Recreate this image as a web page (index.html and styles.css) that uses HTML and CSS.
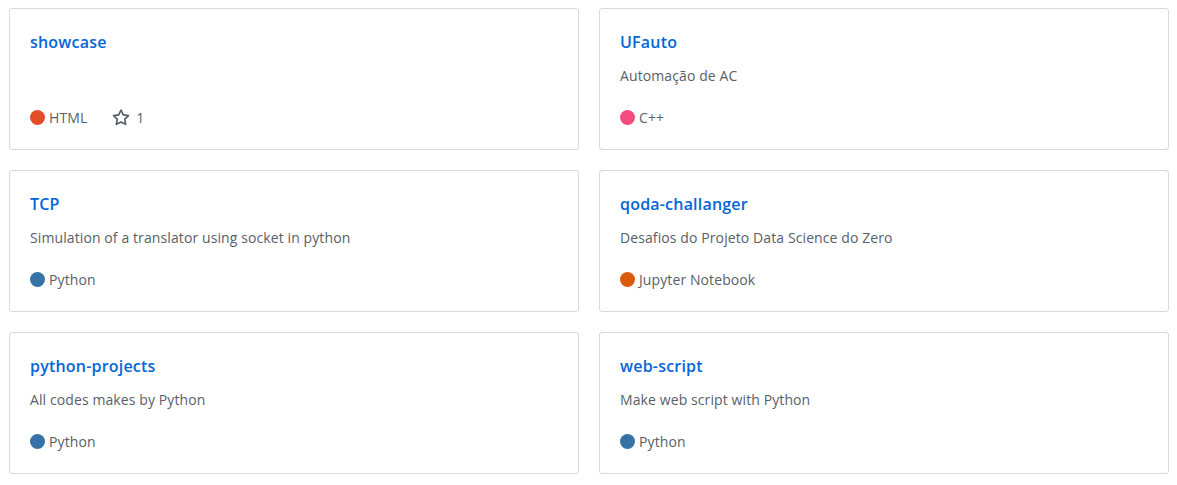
FILE: index.html
```html
<!DOCTYPE html>
<html>
<head>
<meta charset="utf-8">
<link rel="stylesheet" href="styles.css">
</head>
<body>
<ol class="pinned">
  <li class="card">
    <a class="repo" href="#">showcase</a>
    <p class="meta">
      <span class="lang"><span class="dot html"></span>HTML</span>
      <span class="stars">
        <svg class="star" viewBox="0 0 16 16" width="18" height="18"><path fill-rule="evenodd" d="M8 .25a.75.75 0 01.673.418l1.882 3.815 4.21.612a.75.75 0 01.416 1.279l-3.046 2.970.719 4.192a.75.75 0 01-1.088.791L8 12.347l-3.766 1.980a.75.75 0 01-1.088-.79l.72-4.194L.818 6.374a.75.75 0 01.416-1.28l4.21-.611L7.327.668A.75.75 0 018 .25zm0 2.445L6.615 5.5a.75.75 0 01-.564.41l-3.097.45 2.240 2.184a.75.75 0 01.216.664l-.528 3.084 2.769-1.456a.75.75 0 01.698 0l2.770 1.456-.53-3.084a.75.75 0 01.216-.664l2.240-2.183-3.096-.45a.75.75 0 01-.564-.41L8 2.694v.001z"/></svg>1
      </span>
    </p>
  </li>
  <li class="card">
    <a class="repo" href="#">UFauto</a>
    <p class="desc">Automação de AC</p>
    <p class="meta"><span class="lang"><span class="dot cpp"></span>C++</span></p>
  </li>
  <li class="card">
    <a class="repo" href="#">TCP</a>
    <p class="desc">Simulation of a translator using socket in python</p>
    <p class="meta"><span class="lang"><span class="dot python"></span>Python</span></p>
  </li>
  <li class="card">
    <a class="repo" href="#">qoda-challanger</a>
    <p class="desc">Desafios do Projeto Data Science do Zero</p>
    <p class="meta"><span class="lang"><span class="dot jupyter"></span>Jupyter Notebook</span></p>
  </li>
  <li class="card">
    <a class="repo" href="#">python-projects</a>
    <p class="desc">All codes makes by Python</p>
    <p class="meta"><span class="lang"><span class="dot python"></span>Python</span></p>
  </li>
  <li class="card">
    <a class="repo" href="#">web-script</a>
    <p class="desc">Make web script with Python</p>
    <p class="meta"><span class="lang"><span class="dot python"></span>Python</span></p>
  </li>
</ol>
</body>
</html>
```
FILE: styles.css
```css
* { box-sizing: border-box; }
html, body { background: #fff; }
body {
  margin: 0;
  padding: 8px 9px;
  font-family: "Open Sans", "Noto Sans", sans-serif;
  color: #586069;
}
.pinned {
  list-style: none;
  margin: 0;
  padding: 0;
  display: grid;
  grid-template-columns: 570px 570px;
  column-gap: 20px;
  row-gap: 20px;
}
.card {
  height: 142px;
  border: 1px solid #d6d9dd;
  border-radius: 3px;
  padding: 21px 20px 21px 20px;
  display: flex;
  flex-direction: column;
  align-items: flex-start;
}
.repo {
  font-size: 16px;
  line-height: 24px;
  font-weight: 600;
  letter-spacing: 0.2px;
  color: #0366d6;
  text-decoration: none;
}
.desc {
  margin: 11px 0 0 0;
  font-size: 14px;
  line-height: 21px;
  letter-spacing: 0.1px;
}
.meta {
  margin: auto 0 0 0;
  font-size: 14px;
  line-height: 21px;
  letter-spacing: 0.1px;
  display: flex;
  align-items: center;
}
.lang { display: inline-flex; align-items: center; }
.dot {
  width: 15px;
  height: 15px;
  border-radius: 50%;
  margin-right: 4px;
  display: inline-block;
}
.html { background: #e34c26; }
.cpp { background: #f34b7d; }
.python { background: #3572a5; }
.jupyter { background: #da5b0b; }
.stars {
  display: inline-flex;
  align-items: center;
  margin-left: 25px;
}
.star { fill: #586069; margin-right: 6px; }
```
